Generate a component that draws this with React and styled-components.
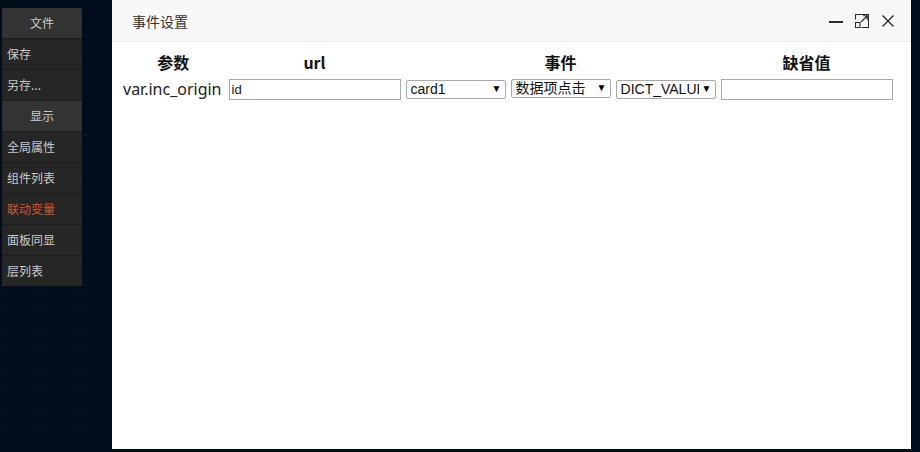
import React from "react";
import styled, { createGlobalStyle } from "styled-components";

const GlobalStyle = createGlobalStyle`
  html, body {
    margin: 0;
    padding: 0;
    width: 920px;
    height: 452px;
    overflow: hidden;
  }
  body {
    background-color: #020d1c;
    background-image: radial-gradient(rgba(120, 150, 190, 0.09) 0.6px, transparent 0.9px);
    background-size: 10px 10px;
    font-family: "Noto Sans", "Noto Sans CJK SC", sans-serif;
  }
`;

const Screen = styled.div`
  display: flex;
  align-items: flex-start;
  width: 920px;
  height: 452px;
  padding-left: 2px;
  box-sizing: border-box;
`;

const Menu = styled.div`
  width: 80px;
  margin-top: 8px;
  background: #1c1c1c;
  display: flex;
  flex-direction: column;
  gap: 1px;
`;

const MenuHead = styled.div`
  height: 30px;
  line-height: 30px;
  background: #333333;
  color: #c9c9c9;
  font-size: 12px;
  text-align: center;
  font-family: "Noto Sans CJK SC", sans-serif;
`;

const MenuItem = styled.div`
  height: 30px;
  line-height: 30px;
  background: #262626;
  color: ${(p) => (p.active ? "#d9532c" : "#c9c9c9")};
  font-size: 12px;
  padding-left: 5px;
  font-family: "Noto Sans CJK SC", sans-serif;
`;

const Modal = styled.div`
  margin-left: 30px;
  width: 799px;
  height: 449px;
  background: #ffffff;
  display: flex;
  flex-direction: column;
`;

const Header = styled.div`
  height: 41px;
  border-bottom: 1px solid #ececec;
  background: #f8f8f8;
  display: flex;
  align-items: center;
  padding: 0 16px 0 20px;
`;

const Title = styled.div`
  flex: 1;
  font-size: 14px;
  color: #333;
  font-family: "Noto Sans CJK SC", sans-serif;
`;

const Tools = styled.div`
  display: flex;
  align-items: center;
  gap: 12px;
`;

const ToolIcon = styled.svg`
  width: 14px;
  height: 14px;
  display: block;
`;

const Body = styled.div`
  padding: 5px 0 0 7px;
`;

const Table = styled.table`
  border-collapse: separate;
  border-spacing: 3px 2px;
`;

const Th = styled.th`
  font-size: 16px;
  font-weight: bold;
  color: #111;
  padding: 1px;
  height: 22px;
  font-family: "Noto Sans CJK SC", sans-serif;
`;

const Td = styled.td`
  padding: ${(p) => (p.first ? "1px 3px 1px 1px" : "1px")};
  font-size: 16px;
  color: #222;
  white-space: nowrap;
  font-family: "Noto Sans", "Noto Sans CJK SC", sans-serif;
`;

const TextInput = styled.input`
  width: 166px;
  height: 17px;
  border: 1px solid #a9a9a9;
  padding: 1px 2px;
  font-size: 13px;
  font-family: "Liberation Sans", Arial, sans-serif;
  color: #111;
  outline: none;
  display: block;
`;

const Select = styled.div`
  display: flex;
  width: 100px;
  height: 19px;
  box-sizing: border-box;
  border: 1px solid #a9a9a9;
  border-radius: 2px;
  font-size: 14px;
  line-height: 17px;
  padding-left: 4px;
  color: #111;
  font-family: "Liberation Sans", "Noto Sans CJK SC", sans-serif;
  margin-top: ${(p) => p.offset || 0}px;
`;

const Value = styled.span`
  flex: 1;
  overflow: hidden;
  white-space: nowrap;
`;

const Arrow = styled.span`
  width: 16px;
  flex: none;
  font-size: 10px;
  line-height: 16px;
  text-align: center;
  color: #000;
`;

const Events = styled.div`
  display: flex;
  gap: 5px;
  align-items: flex-start;
`;

const menu = [
  { head: "文件" },
  { label: "保存" },
  { label: "另存..." },
  { head: "显示" },
  { label: "全局属性" },
  { label: "组件列表" },
  { label: "联动变量", active: true },
  { label: "面板同显" },
  { label: "层列表" },
];

const selects = [
  { value: "card1", offset: 1 },
  { value: "数据项点击", offset: 0 },
  { value: "DICT_VALUE", offset: 1 },
];

export default function App() {
  return (
    <>
      <GlobalStyle />
      <Screen>
        <Menu>
          {menu.map((m) =>
            m.head ? (
              <MenuHead key={m.head}>{m.head}</MenuHead>
            ) : (
              <MenuItem key={m.label} active={m.active}>
                {m.label}
              </MenuItem>
            )
          )}
        </Menu>
        <Modal>
          <Header>
            <Title>事件设置</Title>
            <Tools>
              <ToolIcon viewBox="0 0 14 14">
                <path d="M0 8h14" stroke="#2b2b33" strokeWidth="2" />
              </ToolIcon>
              <ToolIcon viewBox="0 0 14 14">
                <path
                  d="M0.5 5.5V0.5h13v13H6.5M0.5 8.5h4.5v5H0.5zM6 8l6-6M8 1.8h4.2v4.2"
                  fill="none"
                  stroke="#2b2b33"
                  strokeWidth="1.1"
                />
              </ToolIcon>
              <ToolIcon viewBox="0 0 14 14">
                <path d="M1.5 1.5l11 11M12.5 1.5l-11 11" stroke="#2b2b33" strokeWidth="1.4" />
              </ToolIcon>
            </Tools>
          </Header>
          <Body>
            <Table>
              <thead>
                <tr>
                  <Th>参数</Th>
                  <Th>url</Th>
                  <Th>事件</Th>
                  <Th>缺省值</Th>
                </tr>
              </thead>
              <tbody>
                <tr>
                  <Td first>var.inc_origin</Td>
                  <Td>
                    <TextInput defaultValue="id" />
                  </Td>
                  <Td>
                    <Events>
                      {selects.map((s) => (
                        <Select key={s.value} offset={s.offset}>
                          <Value>{s.value}</Value>
                          <Arrow>▼</Arrow>
                        </Select>
                      ))}
                    </Events>
                  </Td>
                  <Td>
                    <TextInput defaultValue="" />
                  </Td>
                </tr>
              </tbody>
            </Table>
          </Body>
        </Modal>
      </Screen>
    </>
  );
}
